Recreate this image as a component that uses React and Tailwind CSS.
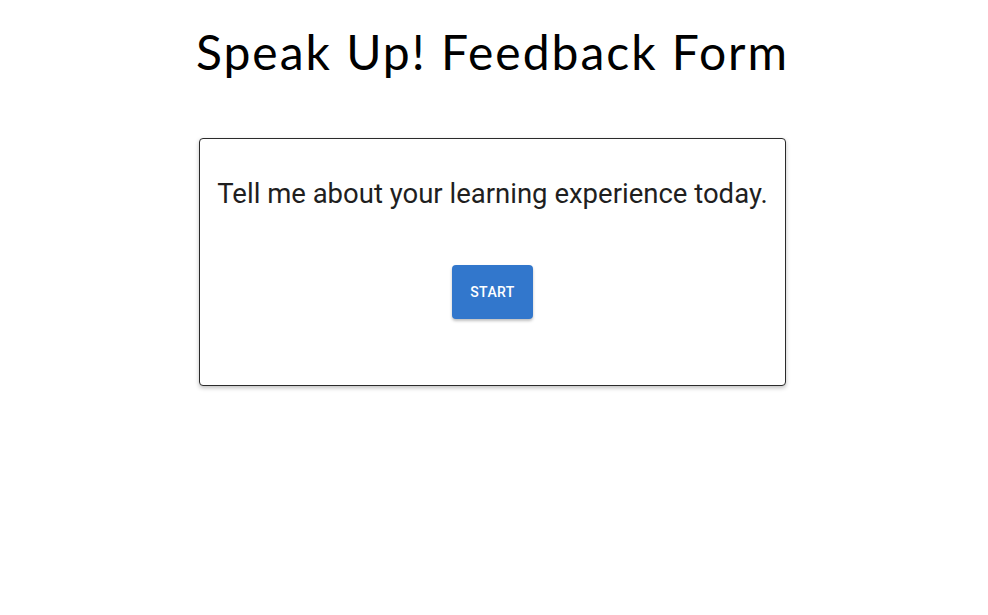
export default function App() {
  return (
    <div className="min-h-screen bg-white flex flex-col items-center pr-[3px]">
      <h1 className="mt-[20px] text-[48px] leading-[64px] text-black tracking-[2px] font-['Lato','Noto_Sans',sans-serif]">
        Speak Up! Feedback Form
      </h1>
      <div className="mt-[54px] w-[587px] h-[248px] border border-[#2b2b2b] rounded-[4px] bg-white shadow-[0_2px_4px_rgba(0,0,0,0.25)] flex flex-col items-center font-['Roboto',sans-serif]">
        <p className="mt-[37px] text-[27.5px] leading-[36px] text-[#1f1f1f]">
          Tell me about your learning experience today.
        </p>
        <button className="mt-[53px] w-[81px] h-[54px] rounded-[4px] bg-[#3277cc] text-white text-[14px] font-medium tracking-[0.4px] shadow-[0_2px_3px_rgba(0,0,0,0.25)]">
          START
        </button>
      </div>
    </div>
  )
}
